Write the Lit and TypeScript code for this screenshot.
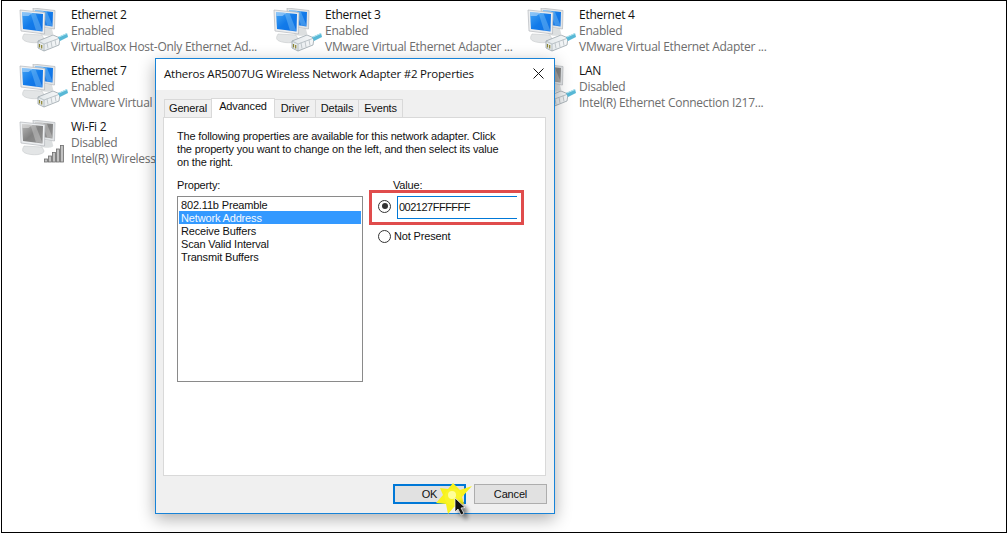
import { LitElement, html, css, svg } from "lit";
import { customElement } from "lit/decorators.js";

const tiles = [
  { n: "Ethernet 2", s: "Enabled", d: "VirtualBox Host-Only Ethernet Ad...", k: "eth" },
  { n: "Ethernet 3", s: "Enabled", d: "VMware Virtual Ethernet Adapter ...", k: "eth" },
  { n: "Ethernet 4", s: "Enabled", d: "VMware Virtual Ethernet Adapter ...", k: "eth" },
  { n: "Ethernet 7", s: "Enabled", d: "VMware Virtual Ethernet Adapter ...", k: "eth" },
  { n: "", s: "", d: "", k: "none" },
  { n: "LAN", s: "Disabled", d: "Intel(R) Ethernet Connection I217...", k: "lan" },
  { n: "Wi-Fi 2", s: "Disabled", d: "Intel(R) Wireless Network Connection", k: "wifi" },
];

function monitor(x: number, y: number, w: number, h: number, g: string, fr: string, gloss: string) {
  return svg`
    <path d="M${x} ${y} L${x + w} ${y + 2.5} L${x + w - 0.5} ${y + h} L${x + 1} ${y + h - 3} Z" fill="${fr}" stroke="#b4b8bb" stroke-width=".7"/>
    <path d="M${x + 2} ${y + 2} L${x + w - 2} ${y + 4} L${x + w - 2.5} ${y + h - 2.5} L${x + 3} ${y + h - 5} Z" fill="url(#${g})"/>
    <path d="M${x + 2} ${y + 2} L${x + w * 0.5} ${y + 3} L${x + w * 0.34} ${y + 6} L${x + 2.5} ${y + 6} Z" fill="#fff" opacity=".4"/>
    <path d="M${x + w * 0.42} ${y + 3} L${x + w * 0.62} ${y + 3.2} L${x + w * 0.9} ${y + h - 3} L${x + w * 0.64} ${y + h - 3.5} Z" fill="${gloss}" opacity=".32"/>`;
}

function netIcon(kind: string) {
  const gray = kind !== "eth";
  const a = gray ? "sg" : "bg";
  const gl = gray ? "#e8e8e8" : "#a5dcfc";
  const plug = kind !== "wifi";
  return html`<svg class="ico" viewBox="0 0 50 46" width="50" height="46">
    <defs>
      <linearGradient id="bg" x1="0" y1="0" x2="1" y2="1">
        <stop offset="0" stop-color="#43a3f4"/><stop offset=".5" stop-color="#127bea"/><stop offset="1" stop-color="#0f6fe2"/>
      </linearGradient>
      <linearGradient id="sg" x1="0" y1="0" x2="1" y2="1">
        <stop offset="0" stop-color="#b8b8b8"/><stop offset=".5" stop-color="#828282"/><stop offset="1" stop-color="#929292"/>
      </linearGradient>
      <linearGradient id="pl" x1="0" y1="0" x2="1" y2="0">
        <stop offset="0" stop-color="#e2e7ea"/><stop offset="1" stop-color="#f6f8f9"/>
      </linearGradient>
    </defs>
    ${svg`
      <path d="M24 20 L34 21 L35 25 C37 28 26 29 22 26 Z" fill="#dcdfe0"/>
      ${monitor(15, 0, 22, 21, a, "#e2e5e7", gl)}
      <path d="M6 26 L24 27 L26 31 C26 35 14 36 7 33 C3 31 5 28 6 26 Z" fill="#e3e5e6" stroke="#c6c9cb" stroke-width=".6"/>
      ${monitor(2, 2, 25, 24, a, "#eceef0", gl)}
    `}
    ${plug
      ? svg`
        <path d="M20 33 L35 27 L42 30 L41 37 L26 43 L20 40 Z" fill="url(#pl)" stroke="#9aa5ab" stroke-width=".8"/>
        <path d="M20 33 L26 36 L42 30 M26 36 L26 43" stroke="#a5afb5" stroke-width=".7" fill="none"/>
        <path d="M29 34.8 L30 40.5 M33 33.3 L34 39 M37 31.8 L38 37.5" stroke="#b5bdc2" stroke-width=".8" fill="none"/>
        <path d="M21.5 36 v3.5 M23.7 37 v3.5" stroke="#8c8430" stroke-width="1.2"/>
        <path d="M40 29 L49 25 L50 29 L42 33 Z" fill="#58b8d6"/>
        <path d="M41 29 L49 25.5" stroke="#bdeaf3" stroke-width=".9"/>`
      : svg`
        <g fill="#c2c2c2" stroke="#6d6d6d" stroke-width=".8">
          <rect x="26.5" y="39" width="3" height="3"/>
          <rect x="30.5" y="36" width="3" height="6"/>
          <rect x="34.5" y="32.5" width="3" height="9.5"/>
          <rect x="38.5" y="29" width="3" height="13"/>
          <rect x="42.5" y="25.5" width="3" height="16.5"/>
        </g>`}
  </svg>`;
}

@customElement("net-tile")
export class NetTile extends LitElement {
  static properties = { n: {}, s: {}, d: {}, k: {} };
  n = "";
  s = "";
  d = "";
  k = "";
  static styles = css`
    :host { display: block; height: 56px; overflow: hidden; }
    .t { display: flex; height: 56px; }
    .ico { flex: none; margin: 1px 3px 0 0; display: block; }
    .txt { font: 12px/16px "Open Sans", sans-serif; letter-spacing: -0.27px; color: #6d6d6d; white-space: nowrap; }
    .name { color: #111; }
  `;
  render() {
    if (this.k === "none") return html``;
    return html`<div class="t">${netIcon(this.k)}<div class="txt">
      <div class="name">${this.n}</div><div>${this.s}</div><div>${this.d}</div></div></div>`;
  }
}

@customElement("app-root")
export class AppRoot extends LitElement {
  static styles = css`
    :host { display: block; width: 1008px; height: 535px; background: #fff; overflow: hidden; position: relative; font-family: "Liberation Sans", Arial, sans-serif; }
    .frame { box-sizing: border-box; width: 1006px; height: 533px; margin-left: 1px; border: 1px solid #000; padding: 6px 0 0 16px; }
    .grid { display: grid; grid-template-columns: repeat(3, 254px); grid-auto-rows: 56px; }
    .dlg { position: absolute; left: 155px; top: 58px; width: 400px; height: 456px; box-sizing: border-box; border: 1px solid #1883d7; background: #f0f0f0; box-shadow: 0 5px 16px rgba(0,0,0,.32); display: flex; flex-direction: column; color: #111; font-size: 11px; letter-spacing: -0.16px; }
    .title { height: 29px; flex: none; background: #fff; display: flex; align-items: center; justify-content: space-between; padding: 0 10px 1px 8px; font: 11.5px "Open Sans", sans-serif; letter-spacing: -0.2px; color: #111; }
    .title svg { display: block; }
    .bodywrap { height: 1px; background: #fff; flex: none; }
    .body { flex: 1; padding: 8px 8px 0 7px; display: flex; flex-direction: column; }
    .tabs { display: flex; height: 19px; padding-left: 2px; align-items: flex-end; position: relative; z-index: 1; }
    .tab { height: 18px; box-sizing: border-box; border: 1px solid #d9d9d9; border-bottom: 0; margin-left: -1px; background: #f0f0f0; text-align: center; line-height: 16px; }
    .tab.on { height: 20px; background: #fff; line-height: 14px; margin-bottom: -1px; }
    .tab:nth-child(1) { width: 48px; }
    .tab:nth-child(2) { width: 64px; }
    .tab:nth-child(3) { width: 42px; }
    .tab:nth-child(4) { width: 44px; }
    .tab:nth-child(5) { width: 45px; }
    .panel { box-sizing: border-box; width: 383px; height: 359px; background: #fff; border: 1px solid #d9d9d9; padding: 12px 10px 0 13px; line-height: 13px; }
    .intro { height: 39px; }
    .cols { display: flex; margin-top: 10px; }
    .left { width: 186px; flex: none; }
    .lab { height: 17px; }
    .list { box-sizing: border-box; width: 186px; height: 186px; border: 1px solid #8a8a8a; padding: 1px; }
    .it { height: 13px; line-height: 15px; padding-left: 2px; }
    .it.sel { background: #3399ff; color: #f4f9ff; }
    .right { margin-left: 15px; width: 154px; position: relative; }
    .vlab { height: 17px; padding-left: 15px; }
    .vrow { display: flex; align-items: center; height: 23px; gap: 6px; }
    .vrow .radio { margin-bottom: 3px; }
    .radio { width: 11px; height: 11px; border-radius: 50%; border: 1px solid #333; background: #fff; display: flex; align-items: center; justify-content: center; flex: none; }
    .radio i { width: 6px; height: 6px; border-radius: 50%; background: #333; }
    .input { box-sizing: border-box; width: 120px; height: 23px; border: 1px solid #0078d7; border-right: 0; padding-left: 1px; line-height: 21px; background: #fff; letter-spacing: -0.5px; }
    .np { display: flex; align-items: center; gap: 3px; margin-top: 11px; height: 13px; }
    .red { position: absolute; left: -9px; top: 11px; width: 155px; height: 35px; box-sizing: border-box; border: 3px solid #e04c4c; }
    .foot { flex: none; height: 38px; display: flex; justify-content: flex-end; gap: 8px; padding: 8px 0 0; margin-right: -1px; box-sizing: border-box; }
    .btn { box-sizing: border-box; width: 73px; height: 20px; background: #e1e1e1; border: 1px solid #adadad; text-align: center; line-height: 18px; }
    .btn.def { border: 2px solid #0078d7; line-height: 16px; }
    .cursor { position: absolute; left: 425px; top: 480px; }
  `;
  render() {
    return html`
      <div class="frame"><div class="grid">
        ${tiles.map((t) => html`<net-tile .n=${t.n} .s=${t.s} .d=${t.d} .k=${t.k}></net-tile>`)}
      </div></div>
      <div class="dlg">
        <div class="title"><span>Atheros AR5007UG Wireless Network Adapter #2 Properties</span>
          <svg width="11" height="11" viewBox="0 0 11 11"><path d="M.5 .5 L10.5 10.5 M10.5 .5 L.5 10.5" stroke="#111" stroke-width="1" fill="none"/></svg>
        </div>
        <div class="bodywrap"></div>
        <div class="body">
          <div class="tabs">
            <div class="tab">General</div><div class="tab on">Advanced</div><div class="tab">Driver</div><div class="tab">Details</div><div class="tab">Events</div>
          </div>
          <div class="panel">
            <div class="intro">The following properties are available for this network adapter. Click<br>the property you want to change on the left, and then select its value<br>on the right.</div>
            <div class="cols">
              <div class="left">
                <div class="lab">Property:</div>
                <div class="list">
                  <div class="it">802.11b Preamble</div>
                  <div class="it sel">Network Address</div>
                  <div class="it">Receive Buffers</div>
                  <div class="it">Scan Valid Interval</div>
                  <div class="it">Transmit Buffers</div>
                </div>
              </div>
              <div class="right">
                <div class="vlab">Value:</div>
                <div class="vrow"><span class="radio"><i></i></span><div class="input">002127FFFFFF</div></div>
                <div class="np"><span class="radio"></span>Not Present</div>
                <div class="red"></div>
              </div>
            </div>
          </div>
          <div class="foot"><div class="btn def">OK</div><div class="btn">Cancel</div></div>
        </div>
      </div>
      <svg class="cursor" width="60" height="45" viewBox="0 0 60 45">
        <defs><filter id="sh" x="-50%" y="-50%" width="200%" height="200%"><feGaussianBlur stdDeviation="2"/></filter></defs>
        <path d="M47 6 L35 10 L28 3 L23 9 L15 8 L18 15 L11 23 L21 24 L23 34 L29 27 L39 24 L37 17 Z" fill="#f8f21c"/>
        <circle cx="28" cy="17" r="8.5" fill="#f9f42a"/>
        <circle cx="27" cy="15" r="4" fill="#ffff9a"/>
        <path d="M32 18 L32 33 L35 30 L38 36 L41 35 L38 29 L42 29 Z" fill="#000" opacity=".55" filter="url(#sh)" transform="translate(2 3)"/>
        <path d="M30 18 L30 32 L33 29 L36 35 L39 33.5 L36 28 L40 27.5 Z" fill="#111" stroke="#fff" stroke-width=".7"/>
      </svg>
    `;
  }
}
